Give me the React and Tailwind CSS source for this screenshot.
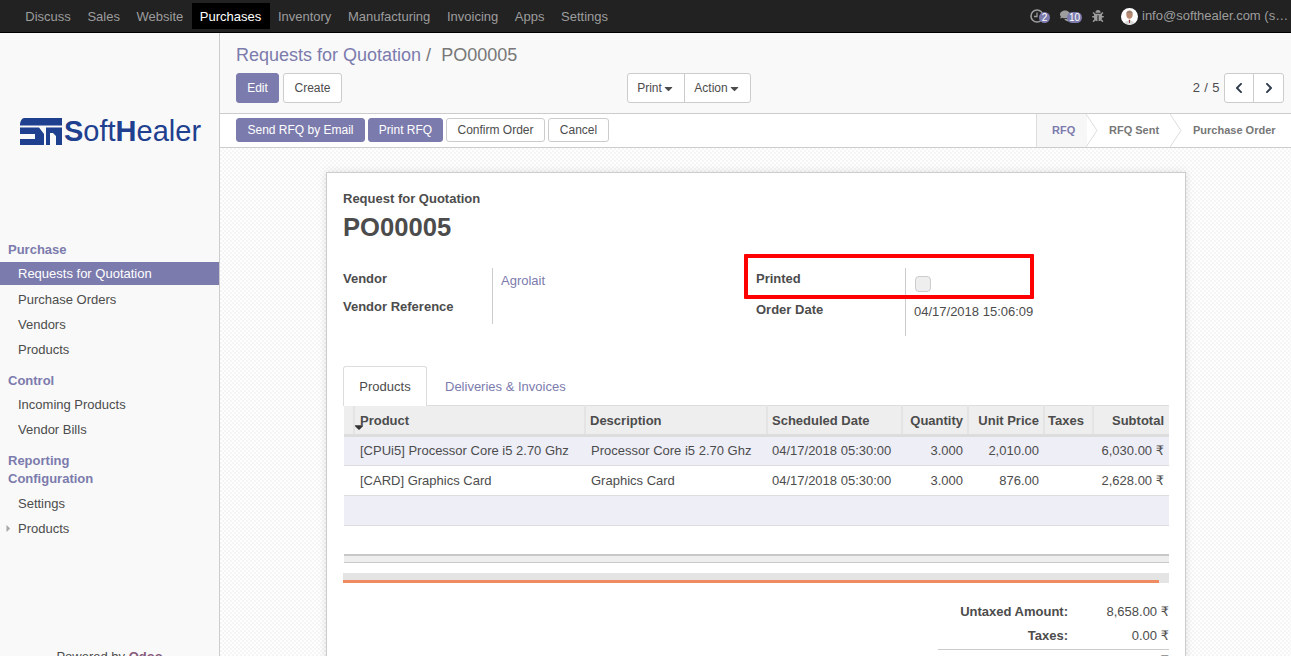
import React from 'react';
import { FaBug, FaComments, FaCaretDown, FaCaretRight, FaChevronLeft, FaChevronRight } from 'react-icons/fa';

const navItems = ['Discuss', 'Sales', 'Website', 'Purchases', 'Inventory', 'Manufacturing', 'Invoicing', 'Apps', 'Settings'];

const rows = [
  ['[CPUi5] Processor Core i5 2.70 Ghz', 'Processor Core i5 2.70 Ghz', '04/17/2018 05:30:00', '3.000', '2,010.00', '6,030.00'],
  ['[CARD] Graphics Card', 'Graphics Card', '04/17/2018 05:30:00', '3.000', '876.00', '2,628.00'],
];

const Money = ({ value }) => (
  <>
    {value} <span className="font-['DejaVu_Sans',sans-serif]">₹</span>
  </>
);

const Logo = () => (
  <div className="flex items-center pl-[20px] h-[30px] text-[#1f3f8f]">
    <svg width="42" height="27" viewBox="0 0 42 27" className="shrink-0">
      {/* SR mark */}
      <path fill="#1f3f8f" d="M4 0H42V7.5H0Q0 1 4 0Z" />
      <path fill="#1f3f8f" d="M0 9.5H19L24 16V27H0V21H15V16H0Z" />
      <path fill="#1f3f8f" d="M26 9.5H42V27H36V18L33 15H30V27H26Z" />
    </svg>
    <span className="ml-[2px] text-[29px] leading-[30px] whitespace-nowrap">
      <b>S</b>oft<b>H</b>ealer
    </span>
  </div>
);

const SideHead = ({ children, className = '' }) => (
  <div className={`px-2 font-bold text-[13px] leading-[18px] text-[#7c7bad] ${className}`}>{children}</div>
);

const SideLink = ({ children, className = '' }) => (
  <div className={`pl-[18px] text-[13px] leading-[25px] h-[25px] text-[#4c4c4c] ${className}`}>{children}</div>
);

const Btn = ({ primary, className = '', children }) => (
  <button className={`rounded-[3px] border text-[12px] whitespace-nowrap ${primary ? 'bg-[#7c7bad] border-[#7c7bad] text-white' : 'bg-white border-[#ccc] text-[#4c4c4c]'} ${className}`}>
    {children}
  </button>
);

const Chevron = () => (
  <svg width="12" height="33" viewBox="0 0 12 33" className="absolute -right-[11px] top-0 z-10">
    <path d="M0 0L11 16.5L0 33" fill="none" stroke="#ddd" />
  </svg>
);

export default function App() {
  return (
    <div className="h-[656px] w-[1291px] overflow-hidden flex flex-col bg-white text-[13px] text-[#4c4c4c] font-['Liberation_Sans',Arial,sans-serif]">
      {/* Top bar */}
      <div className="h-[33px] shrink-0 bg-[#222] border-b border-black flex items-center justify-between">
        <div className="flex items-center pl-[17px] text-[#9d9d9d]">
          {navItems.map((item) => (
            <span
              key={item}
              className={`h-[26px] leading-[27px] px-[8.3px] ${item === 'Purchases' ? 'bg-black text-white' : ''}`}
            >
              {item}
            </span>
          ))}
        </div>
        <div className="flex items-center text-[#9d9d9d]">
          <div className="relative w-[20px] h-[16px]">
            <svg width="14" height="14" viewBox="0 0 14 14" className="absolute left-0 top-[1px]">
              <circle cx="7" cy="7" r="6" fill="none" stroke="#9d9d9d" strokeWidth="1.6" />
              <path d="M7 3.5V7.5H4" fill="none" stroke="#9d9d9d" strokeWidth="1.3" />
            </svg>
            <span className="absolute left-[9px] top-[4px] w-[11px] h-[11px] rounded-full bg-[#7c7bad] text-white text-[10px] leading-[11px] text-center">2</span>
          </div>
          <div className="relative w-[22px] h-[16px] ml-[10px]">
            <FaComments className="absolute left-0 top-[1px] text-[14px]" />
            <span className="absolute left-[7px] top-[4px] w-[15px] h-[11px] rounded-full bg-[#7c7bad] text-white text-[10px] leading-[11px] text-center">10</span>
          </div>
          <FaBug className="ml-[10px] text-[12px]" />
          <svg width="17" height="17" viewBox="0 0 18 18" className="ml-[17px]">
            <circle cx="9" cy="9" r="9" fill="#fff" />
            <ellipse cx="9" cy="7" rx="3.4" ry="4.4" fill="#b98a72" />
            <path d="M5.6 6C5.6 3 12.4 3 12.4 6L11 4.8H7Z" fill="#777" />
            <path d="M3.5 16C4.5 12.5 13.5 12.5 14.5 16L9 18Z" fill="#d8d8d8" />
            <path d="M8.2 12.5H9.8L9.4 16H8.6Z" fill="#8a3a3a" />
          </svg>
          <span className="ml-[4px] w-[149px] truncate">info@softhealer.com (sh_admin)</span>
        </div>
      </div>

      <div className="flex flex-1 min-h-0">
        {/* Sidebar */}
        <aside className="w-[220px] shrink-0 bg-[#f9f9f9] border-r border-[#ccc] flex flex-col">
          <div className="mt-[83px] mb-[95px]">
            <Logo />
          </div>
          <SideHead className="mb-[3px]">Purchase</SideHead>
          <div className="pl-[18px] h-[23px] leading-[23px] bg-[#7c7bad] text-white">Requests for Quotation</div>
          <SideLink className="mt-[2px]">Purchase Orders</SideLink>
          <SideLink>Vendors</SideLink>
          <SideLink>Products</SideLink>
          <SideHead className="mt-[10px] mb-[2px]">Control</SideHead>
          <SideLink>Incoming Products</SideLink>
          <SideLink>Vendor Bills</SideLink>
          <SideHead className="mt-[10px]">Reporting</SideHead>
          <SideHead className="mb-[3px]">Configuration</SideHead>
          <SideLink>Settings</SideLink>
          <div className="relative">
            <FaCaretRight className="absolute left-[3px] top-[7px] text-[11px] text-[#aaa]" />
            <SideLink>Products</SideLink>
          </div>
          <div className="mt-[107px] text-center leading-[18px]">
            Powered by <span className="font-bold text-[#875a7b]">Odoo</span>
          </div>
        </aside>

        <main className="flex-1 min-w-0 flex flex-col">
          {/* Control panel */}
          <div className="h-[80px] shrink-0 bg-[#f9f9f9] pl-[16px] pr-[7px] pt-[11px]">
            <div className="text-[18px] leading-[22px] text-[#777]">
              <span className="text-[#7c7bad]">Requests for Quotation</span>
              <span className="ml-[5px]">/</span>
              <span className="ml-[10px]">PO00005</span>
            </div>
            <div className="flex items-center mt-[7px]">
              <Btn primary className="h-[30px] w-[43px]">Edit</Btn>
              <Btn className="h-[30px] w-[59px] ml-[4px]">Create</Btn>
              <div className="ml-[285px] flex h-[30px] rounded-[3px] border border-[#ccc] bg-white text-[12px]">
                <span className="w-[57px] flex items-center justify-center border-r border-[#ccc]">Print<FaCaretDown className="text-[13px]" /></span>
                <span className="w-[65px] flex items-center justify-center">Action<FaCaretDown className="text-[13px]" /></span>
              </div>
              <span className="ml-auto mr-[4px] text-[13px] tracking-[0.4px]">2 / 5</span>
              <div className="flex h-[30px] rounded-[3px] border border-[#ccc] bg-white text-[#2f3b4c]">
                <span className="w-[29px] flex items-center justify-center border-r border-[#ccc]"><FaChevronLeft className="text-[12px]" /></span>
                <span className="w-[29px] flex items-center justify-center"><FaChevronRight className="text-[12px]" /></span>
              </div>
            </div>
          </div>

          {/* Status bar */}
          <div className="h-[35px] shrink-0 bg-white border-y border-[#ccc] flex items-center justify-between pl-[16px]">
            <div className="flex gap-[3px] pb-[1px]">
              <Btn primary className="h-[24px] w-[129px]">Send RFQ by Email</Btn>
              <Btn primary className="h-[24px] w-[75px]">Print RFQ</Btn>
              <Btn className="h-[24px] w-[99px]">Confirm Order</Btn>
              <Btn className="h-[24px] w-[61px]">Cancel</Btn>
            </div>
            <div className="flex h-full text-[11px] font-bold text-[#777] w-[255px] border-l border-[#ddd]">
              <span className="relative w-[50px] bg-[#f7f7f7] text-[#7c7bad] flex items-center pl-[15px]">RFQ<Chevron /></span>
              <span className="relative w-[84px] flex items-center pl-[22px]">RFQ Sent<Chevron /></span>
              <span className="flex-1 flex items-center pl-[22px] whitespace-nowrap">Purchase Order</span>
            </div>
          </div>

          {/* Sheet area */}
          <div className="flex-1 min-h-0 overflow-hidden bg-[repeating-conic-gradient(#f5f5f5_0_25%,#ffffff_0_50%)] bg-[length:4px_4px] pl-[106px] pt-[24px]">
            <div className="relative w-[860px] h-[600px] bg-white border border-[#ccc] shadow-[0_0_8px_rgba(0,0,0,0.12)] px-[16px] pt-[17px]">
              <div className="font-bold leading-[18px]">Request for Quotation</div>
              <div className="font-bold text-[25.6px] leading-[30px] mt-[4px]">PO00005</div>

              <div className="flex mt-[26px]">
                <div className="w-[149px] pt-[2px] font-bold leading-[18px]">
                  <div>Vendor</div>
                  <div className="mt-[10px]">Vendor Reference</div>
                </div>
                <div className="h-[56px] w-[264px] border-l border-[#ccc] pl-[8px] pt-[4px] leading-[18px] text-[#7c7bad]">Agrolait</div>
                <div className="w-[149px] pt-[2px] font-bold leading-[18px]">
                  <div>Printed</div>
                  <div className="mt-[13px]">Order Date</div>
                </div>
                <div className="h-[68px] border-l border-[#ccc] pl-[8px]">
                  <div className="w-[16px] h-[16px] ml-[1px] mt-[8px] rounded-[4px] border border-[#ccc] bg-[#eee]" />
                  <div className="mt-[11px] leading-[18px]">04/17/2018 15:06:09</div>
                </div>
              </div>

              {/* Red highlight */}
              <div className="absolute left-[417px] top-[81px] w-[290px] h-[45px] border-[4px] border-[#f00] rounded-[1px]" />

              {/* Tabs */}
              <div className="flex items-end h-[39px] mt-[30px]">
                <div className="w-[84px] h-[40px] -mb-px z-10 bg-white border border-b-0 border-[#ddd] rounded-t-[3px] flex items-center justify-center">Products</div>
                <div className="ml-[18px] h-[39px] pt-[2px] flex items-center text-[#7c7bad]">Deliveries &amp; Invoices</div>
              </div>

              {/* Lines */}
              <table className="ml-[1px] w-[825px] table-fixed border-collapse">
                <colgroup>
                  <col className="w-[10px]" />
                  <col className="w-[231px]" />
                  <col className="w-[182px]" />
                  <col className="w-[135px]" />
                  <col className="w-[66px]" />
                  <col className="w-[76px]" />
                  <col className="w-[49px]" />
                  <col className="w-[76px]" />
                </colgroup>
                <thead>
                  <tr className="h-[30px] bg-[#eee] border-y border-t-[#ddd] border-b-[3px] border-b-[#ddd]">
                    <th className="border-r-2 border-[#e4e4e4]" />
                    <th className="relative text-left font-bold pt-[1px] px-[5px] border-r-2 border-[#e4e4e4]">
                      Product
                      <FaCaretDown className="absolute -left-[3px] top-[14px] text-[14px] text-[#333]" />
                    </th>
                    <th className="text-left font-bold pt-[1px] px-[4px] border-r-2 border-[#e4e4e4]">Description</th>
                    <th className="text-left font-bold pt-[1px] px-[4px] border-r-2 border-[#e4e4e4]">Scheduled Date</th>
                    <th className="text-right font-bold pt-[1px] px-[4px] border-r-2 border-[#e4e4e4]">Quantity</th>
                    <th className="text-right font-bold pt-[1px] px-[4px] border-r-2 border-[#e4e4e4]">Unit Price</th>
                    <th className="text-left font-bold pt-[1px] px-[3px] border-r-2 border-[#e4e4e4]">Taxes</th>
                    <th className="text-right font-bold pt-[1px] px-[5px]">Subtotal</th>
                  </tr>
                </thead>
                <tbody>
                  {rows.map((r, i) => (
                    <tr key={r[0]} className={`h-[30px] border-b border-[#ddd] ${i % 2 === 0 ? 'bg-[#eeeef7]' : 'bg-white'}`}>
                      <td />
                      <td className="px-[6px] whitespace-nowrap">{r[0]}</td>
                      <td className="px-[6px] whitespace-nowrap">{r[1]}</td>
                      <td className="px-[5px] whitespace-nowrap">{r[2]}</td>
                      <td className="px-[5px] text-right">{r[3]}</td>
                      <td className="px-[5px] text-right">{r[4]}</td>
                      <td />
                      <td className="px-[5px] text-right whitespace-nowrap"><Money value={r[5]} /></td>
                    </tr>
                  ))}
                  <tr className="h-[30px] border-b border-[#ddd] bg-[#eeeef7]"><td colSpan={8} /></tr>
                </tbody>
              </table>

              {/* Table footer */}
              <div className="ml-[1px] w-[825px] h-[9px] mt-[28px] bg-[#eee] border-t-2 border-b border-[#c8c8c8]" />

              {/* Progress */}
              <div className="w-[826px] h-[10px] mt-[10px] bg-[#e4e4e4] flex items-end">
                <div className="w-[816px] h-[3px] bg-[#f08a60]" />
              </div>

              {/* Totals */}
              <div className="ml-auto w-[231px] mt-[17px]">
                <div className="flex leading-[24px]">
                  <span className="w-[130px] text-right font-bold">Untaxed Amount:</span>
                  <span className="flex-1 text-right"><Money value="8,658.00" /></span>
                </div>
                <div className="flex leading-[24px]">
                  <span className="w-[130px] text-right font-bold">Taxes:</span>
                  <span className="flex-1 text-right"><Money value="0.00" /></span>
                </div>
                <div className="border-t border-[#ccc] mt-[1px]" />
                <div className="flex font-bold leading-[22px]">
                  <span className="w-[130px] text-right">Total:</span>
                  <span className="flex-1 text-right"><Money value="8,658.00" /></span>
                </div>
              </div>
            </div>
          </div>
        </main>
      </div>
    </div>
  );
}
